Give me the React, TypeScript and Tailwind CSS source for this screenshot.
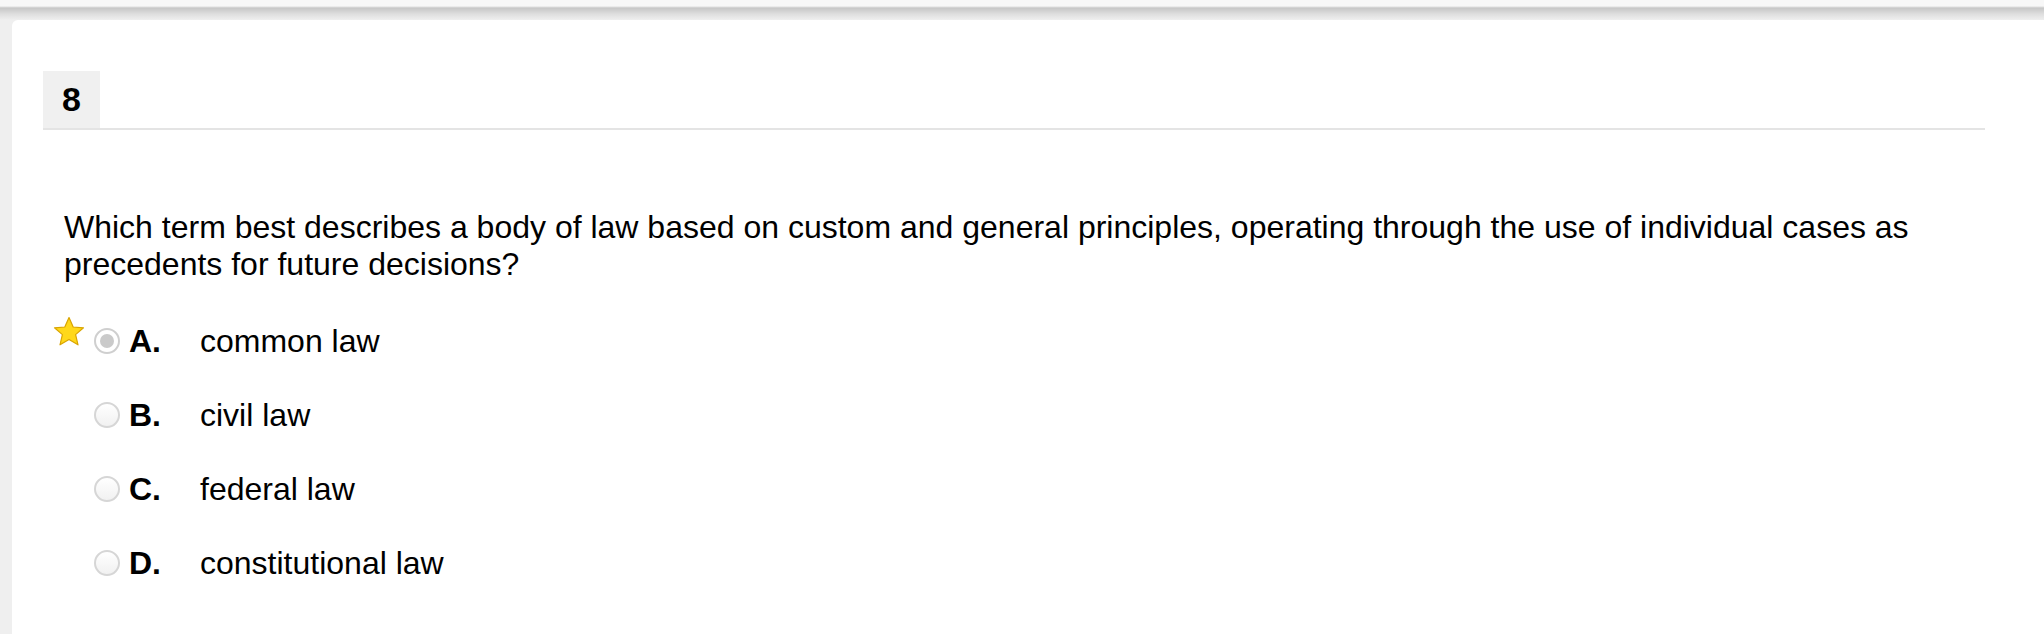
import React from "react";

const options = [
  { letter: "A.", text: "common law", selected: true },
  { letter: "B.", text: "civil law", selected: false },
  { letter: "C.", text: "federal law", selected: false },
  { letter: "D.", text: "constitutional law", selected: false },
];

function Star() {
  return (
    <svg width="32" height="31" viewBox="0 0 32 31" className="absolute left-[10px] top-[12px]">
      <polygon
        points="16,1.5 20.2,11 30.5,11.8 22.6,18.6 25,28.8 16,23.4 7,28.8 9.4,18.6 1.5,11.8 11.8,11"
        fill="#ffd81a"
        stroke="#d9a400"
        strokeWidth="1.2"
        strokeLinejoin="round"
      />
    </svg>
  );
}

function Radio({ selected }: { selected: boolean }) {
  return (
    <div
      className={
        selected
          ? "w-[26px] h-[26px] rounded-full border-2 border-[#cfcfcf] bg-white flex items-center justify-center shrink-0"
          : "w-[26px] h-[26px] rounded-full border-2 border-[#d6d6d6] bg-[linear-gradient(to_bottom,#ffffff,#f1f1f1)] shrink-0"
      }
    >
      {selected && <div className="w-[14px] h-[14px] rounded-full bg-[#cacaca]" />}
    </div>
  );
}

export default function App() {
  return (
    <div className="w-[2044px] h-[634px] overflow-hidden bg-[#efefef] font-['Liberation_Sans',Arial,sans-serif] text-black">
      <div className="h-[20px] bg-[linear-gradient(to_bottom,#f7f7f7_0px,#f7f7f7_6px,#c6c6c6_8px,#dedede_14px,#efefef_20px)]" />
      <div className="pl-[12px]">
        <div className="bg-white rounded-tl-[6px] h-[614px] pt-[51px] pl-[31px] pr-[59px]">
          <div className="flex border-b-2 border-[#e4e4e4]">
            <div className="w-[57px] h-[57px] bg-[#f0f0f0] flex items-center justify-center text-[34px] font-bold">
              8
            </div>
          </div>
          <div className="mt-[79px] pl-[21px] text-[32px] leading-[37px]">
            Which term best describes a body of law based on custom and general principles, operating through the use of individual cases as precedents for future decisions?
          </div>
          <div className="mt-[21px]">
            {options.map((o) => (
              <div key={o.letter} className="relative h-[74px] flex items-center pl-[51px] text-[32px]">
                {o.selected && <Star />}
                <Radio selected={o.selected} />
                <div className="ml-[9px] w-[71px] font-bold">{o.letter}</div>
                <div>{o.text}</div>
              </div>
            ))}
          </div>
        </div>
      </div>
    </div>
  );
}
